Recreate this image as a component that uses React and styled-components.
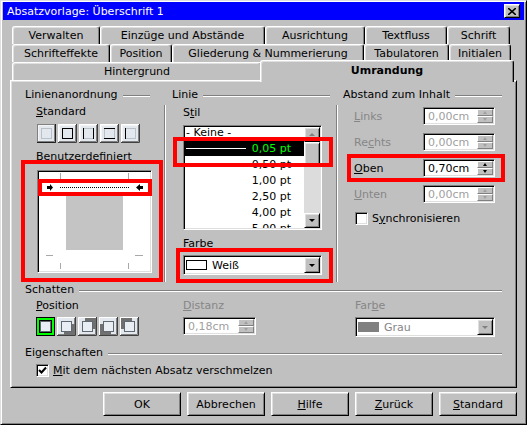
import React from 'react'
import styled, { createGlobalStyle, css } from 'styled-components'

const GlobalStyle = createGlobalStyle`
  html, body {
    margin: 0;
    background: #c0c0c0;
  }
  body {
    font-family: "DejaVu Sans", Verdana, sans-serif;
    font-size: 11px;
    color: #000;
  }
`

// classic 3d edges
const raised = css`
  border: 1px solid;
  border-color: #fff #000 #000 #fff;
  box-shadow: inset 1px 1px #dfdfdf, inset -1px -1px #808080;
`
const sunken = css`
  border: 1px solid;
  border-color: #808080 #fff #fff #808080;
  box-shadow: inset 1px 1px #000, inset -1px -1px #dfdfdf;
`

const Window = styled.div`
  width: 527px;
  height: 425px;
  box-sizing: border-box;
  border: 1px solid;
  border-color: #dfdfdf #000 #000 #dfdfdf;
  box-shadow: inset 1px 1px #fff, inset -1px -1px #808080;
  padding: 1px 2px 2px 2px;
  display: flex;
  flex-direction: column;
  background: #c0c0c0;
`

const TitleBar = styled.div`
  height: 18px;
  flex-shrink: 0;
  background: #0000ff;
  color: #fff;
  display: flex;
  align-items: center;
  justify-content: space-between;
  padding-left: 4px;
`

const CloseButton = styled.div`
  ${raised};
  box-sizing: border-box;
  width: 16px;
  height: 14px;
  margin-right: 4px;
  background: #c0c0c0;
  display: flex;
  align-items: center;
  justify-content: center;
`

const TabStrip = styled.div`
  margin: 6px 0 0 9px;
  display: flex;
  flex-direction: column;
`

const TabRow = styled.div`
  display: flex;
  align-items: flex-end;
  height: 18px;
`

const Tab = styled.div`
  box-sizing: border-box;
  flex-shrink: 0;
  width: ${p => p.$w}px;
  height: 18px;
  border-top: 1px solid #fff;
  border-left: 1px solid #fff;
  border-right: 1px solid #000;
  border-radius: 3px 3px 0 0;
  box-shadow: inset -1px 0 #808080, inset 1px 1px #dfdfdf;
  background: #c0c0c0;
  display: flex;
  align-items: center;
  justify-content: center;
  white-space: nowrap;

  ${p => p.$active && css`
    position: relative;
    z-index: 2;
    height: 22px;
    margin-left: -2px;
    margin-bottom: -2px;
    padding-bottom: 2px;
    font-weight: bold;
  `}
`

const Page = styled.div`
  margin-left: 7px;
  width: 507px;
  box-sizing: border-box;
  ${raised};
  padding: 7px 14px 10px 14px;
`

const Groups = styled.div`
  display: grid;
  grid-template-columns: 139px 2px 170px 2px 1fr;
  grid-template-rows: 17px 177px;
  grid-template-areas:
    "h1 . h2 . h3"
    "b1 s1 b2 s2 b3";
`

const GroupHead = styled.div`
  grid-area: ${p => p.$area || 'auto'};
  display: flex;
  align-items: center;
  height: 14px;
  line-height: 14px;
  white-space: nowrap;
  padding-left: ${p => p.$indent || 0}px;
  margin-top: ${p => p.$top || 0}px;

  &::after {
    content: '';
    flex: 1;
    border-top: 1px solid #808080;
    border-bottom: 1px solid #fff;
    margin: 1px ${p => p.$trail || 0}px 0 5px;
  }
`

const Divider = styled.div`
  grid-area: ${p => p.$area};
  border-left: 1px solid #808080;
  border-right: 1px solid #fff;
`

const Column = styled.div`
  grid-area: ${p => p.$area};
  display: flex;
  flex-direction: column;
  align-items: flex-start;
  padding-left: ${p => p.$indent || 0}px;
`

const Caption = styled.div`
  height: 14px;
  line-height: 14px;
  white-space: nowrap;
  margin-top: ${p => p.$top || 0}px;
  margin-left: ${p => p.$indent || 0}px;
  color: ${p => (p.$disabled ? '#868686' : '#000')};
`

const U = styled.span`
  text-decoration: underline;
`

const Anchor = styled.div`
  position: relative;
  margin-top: ${p => p.$top || 0}px;
  margin-left: ${p => p.$left || 0}px;
`

const Marker = styled.div`
  position: absolute;
  left: ${p => p.$x}px;
  top: ${p => p.$y}px;
  width: ${p => p.$w}px;
  height: ${p => p.$h}px;
  box-sizing: border-box;
  border: 4px solid #ff0000;
  pointer-events: none;
  z-index: 3;
`

const IconRow = styled.div`
  display: flex;
  gap: 2px;
  height: 20px;
  margin-top: ${p => p.$top || 0}px;
  margin-left: ${p => p.$left || 0}px;
`

const PreviewFrame = styled.div`
  ${sunken};
  box-sizing: border-box;
  width: 115px;
  height: 103px;
  padding: 1px;
  background: #fff;
  display: flex;
`

const ListFrame = styled.div`
  ${sunken};
  box-sizing: border-box;
  width: 139px;
  height: 105px;
  padding: 1px;
  background: #fff;
  display: flex;
  overflow: hidden;
`

const ListItems = styled.div`
  flex: 1;
  display: flex;
  flex-direction: column;
  overflow: hidden;
`

const ListRow = styled.div`
  flex-shrink: 0;
  height: 16px;
  display: flex;
  align-items: center;
  justify-content: ${p => (p.$plain ? 'flex-start' : 'space-between')};
  padding: 0 13px 0 1px;
  margin-top: ${p => (p.$first ? -3 : 0)}px;
  background: ${p => (p.$selected ? '#000' : 'transparent')};
  color: ${p => (p.$selected ? '#00ff00' : '#000')};
`

const LineSample = styled.span`
  width: 60px;
  height: 1px;
  background: ${p => (p.$visible ? '#fff' : 'transparent')};
`

const ScrollBar = styled.div`
  width: 16px;
  display: flex;
  flex-direction: column;
`

const ScrollButton = styled.div`
  ${raised};
  box-sizing: border-box;
  height: 15px;
  background: #c0c0c0;
  display: flex;
  align-items: center;
  justify-content: center;
`

const ScrollThumb = styled.div`
  ${raised};
  box-sizing: border-box;
  height: 24px;
  background: #c0c0c0;
`

const ScrollTrack = styled.div`
  flex: 1;
  background: #dcdcdc;
`

const Arrow = styled.span`
  width: 0;
  height: 0;
  border-left: ${p => p.$size}px solid transparent;
  border-right: ${p => p.$size}px solid transparent;
  ${p => (p.$up
    ? css`border-bottom: ${Math.ceil(p.$size * 0.6) + 1}px solid ${p.$color};`
    : css`border-top: ${Math.ceil(p.$size * 0.6) + 1}px solid ${p.$color};`)}
`

const Combo = styled.div`
  ${sunken};
  box-sizing: border-box;
  width: ${p => p.$w}px;
  height: 20px;
  padding: 1px;
  background: #fff;
  display: flex;
`

const ComboValue = styled.div`
  flex: 1;
  display: flex;
  align-items: center;
  gap: 5px;
  padding-left: 1px;
  color: ${p => (p.$disabled ? '#868686' : '#000')};
`

const Swatch = styled.span`
  box-sizing: border-box;
  width: 21px;
  height: 10px;
  border: 1px solid ${p => p.$edge};
  background: ${p => p.$fill};
`

const ComboButton = styled.div`
  ${raised};
  box-sizing: border-box;
  width: 16px;
  background: #c0c0c0;
  display: flex;
  align-items: center;
  justify-content: center;
`

const SpinRows = styled.div`
  display: flex;
  flex-direction: column;
  gap: 8px;
  margin-top: 2px;
`

const SpinRow = styled.div`
  position: relative;
  display: flex;
  align-items: center;
  height: 18px;
`

const SpinLabel = styled.span`
  width: 69px;
  color: ${p => (p.$disabled ? '#868686' : '#000')};
`

const SpinField = styled.div`
  ${sunken};
  box-sizing: border-box;
  width: ${p => p.$w}px;
  height: 18px;
  padding: 1px;
  background: #fff;
  display: flex;
`

const SpinText = styled.span`
  flex: 1;
  display: flex;
  align-items: center;
  padding-left: 3px;
  color: ${p => (p.$disabled ? '#a0a0a0' : '#000')};
`

const SpinButtons = styled.div`
  width: 16px;
  display: flex;
  flex-direction: column;
`

const SpinHalf = styled.div`
  box-sizing: border-box;
  flex: 1;
  border: 1px solid;
  border-color: #fff #808080 #808080 #fff;
  background: #c0c0c0;
  display: flex;
  align-items: center;
  justify-content: center;
`

const CheckLine = styled.label`
  display: flex;
  align-items: center;
  gap: 4px;
  height: 14px;
  margin-top: ${p => p.$top || 0}px;
  margin-left: ${p => p.$indent || 0}px;
`

const CheckBox = styled.span`
  ${sunken};
  box-sizing: border-box;
  width: 13px;
  height: 13px;
  background: #fff;
  display: inline-flex;
  align-items: center;
  justify-content: center;
`

const ShadowGrid = styled.div`
  display: grid;
  grid-template-columns: 147px 172px 1fr;
  margin-top: 2px;
  padding-left: 11px;
`

const ShadowCell = styled.div`
  display: flex;
  flex-direction: column;
  align-items: flex-start;
  gap: 4px;
`

const ButtonBar = styled.div`
  display: flex;
  justify-content: flex-end;
  gap: 6px;
  margin-top: 4px;
  padding-right: 7px;
`

const PushButton = styled.button`
  ${raised};
  box-sizing: border-box;
  width: 78px;
  height: 24px;
  padding: 0;
  background: #c0c0c0;
  font: inherit;
  color: #000;
`

// line arrangement presets: which sides carry a line
function BorderPreset({ sides = '', focus }) {
  const has = s => sides.includes(s)
  return (
    <svg width="19" height="19" viewBox="0 0 19 19">
      <rect x="0" y="0" width="19" height="19" fill="#e2e8ee" />
      <path d="M0.5 18 V0.5 H18" stroke="#fff" fill="none" />
      <path d="M18.5 0 V18.5 H0" stroke="#404040" fill="none" />
      <path d="M1.5 17 V1.5 H17" stroke="#f4f4f4" fill="none" />
      <path d="M17.5 1 V17.5 H1" stroke="#808080" fill="none" />
      <rect x="4.5" y="4.5" width="10" height="10" fill="none" stroke="#b8c0c8" />
      {has('l') && <path d="M4.5 4 V15" stroke="#000" />}
      {has('r') && <path d="M14.5 4 V15" stroke="#000" />}
      {has('t') && <path d="M4 4.5 H15" stroke="#000" />}
      {has('b') && <path d="M4 14.5 H15" stroke="#000" />}
      {focus && (
        <rect x="0.5" y="0.5" width="18" height="18" fill="none" stroke="#000" strokeDasharray="1 1" />
      )}
    </svg>
  )
}

// shadow position presets: dx/dy is the offset of the cast shadow
function ShadowPreset({ dx = 0, dy = 0, selected }) {
  return (
    <svg width="19" height="19" viewBox="0 0 19 19">
      <rect x="0" y="0" width="19" height="19" fill="#e2e8ee" />
      <path d="M0.5 18 V0.5 H18" stroke="#fff" fill="none" />
      <path d="M18.5 0 V18.5 H0" stroke="#404040" fill="none" />
      <path d="M17.5 1 V17.5 H1" stroke="#808080" fill="none" />
      {(dx !== 0 || dy !== 0) && (
        <rect x={4 + dx} y={4 + dy} width="11" height="11" fill="#707070" />
      )}
      <rect x="4.5" y="4.5" width="10" height="10" fill="#e8eef4" stroke="#606870" />
      {selected && (
        <>
          <rect x="0.5" y="0.5" width="18" height="18" fill="none" stroke="#000" />
          <rect x="2" y="2" width="15" height="15" fill="none" stroke="#00ff00" strokeWidth="2" />
          <rect x="3.5" y="3.5" width="12" height="12" fill="none" stroke="#000" />
        </>
      )}
    </svg>
  )
}

function BorderPreview() {
  return (
    <svg width="111" height="99" viewBox="0 0 111 99">
      <rect x="27" y="21" width="57" height="57" fill="#c4c4c4" />
      <g stroke="#a8a8a8">
        <path d="M21.5 1 V7 M89.5 1 V7" />
        <path d="M21.5 91 V97 M89.5 91 V97" />
        <path d="M7 83.5 H14 M96 83.5 H104" />
      </g>
      <path d="M21 15.5 H90" stroke="#000" strokeDasharray="1 1" />
      <path d="M8 14 H11 V12 L14 15.5 L11 19 V17 H8 Z" fill="#000" />
      <path d="M104 14 H101 V12 L97 15.5 L101 19 V17 H104 Z" fill="#000" />
    </svg>
  )
}

function Spinner({ value, disabled, width = 72 }) {
  const color = disabled ? '#a0a0a0' : '#000'
  return (
    <SpinField $w={width}>
      <SpinText $disabled={disabled}>{value}</SpinText>
      <SpinButtons>
        <SpinHalf><Arrow $up $size={2} $color={color} /></SpinHalf>
        <SpinHalf><Arrow $size={2} $color={color} /></SpinHalf>
      </SpinButtons>
    </SpinField>
  )
}

function Mnemonic({ text, at }) {
  return (
    <>
      {text.slice(0, at)}
      <U>{text[at]}</U>
      {text.slice(at + 1)}
    </>
  )
}

const tabRows = [
  [['Verwalten', 88], ['Einzüge und Abstände', 165], ['Ausrichtung', 100], ['Textfluss', 82], ['Schrift', 63]],
  [['Schrifteffekte', 98], ['Position', 62], ['Gliederung & Nummerierung', 192], ['Tabulatoren', 85], ['Initialen', 62]],
]

const lineStyles = ['0,05 pt', '0,50 pt', '1,00 pt', '2,50 pt', '4,00 pt', '5,00 pt']

const spacing = [
  { label: 'Links', at: 0, value: '0,00cm', disabled: true },
  { label: 'Rechts', at: 2, value: '0,00cm', disabled: true },
  { label: 'Oben', at: 0, value: '0,70cm', marked: true },
  { label: 'Unten', at: 0, value: '0,00cm', disabled: true },
]

export default function App() {
  return (
    <>
      <GlobalStyle />
      <Window>
        <TitleBar>
          <span>Absatzvorlage: Überschrift 1</span>
          <CloseButton>
            <svg width="8" height="7" viewBox="0 0 8 7">
              <path d="M0 0 L8 7 M8 0 L0 7" stroke="#000" strokeWidth="1.6" />
            </svg>
          </CloseButton>
        </TitleBar>

        <TabStrip>
          {tabRows.map((row, i) => (
            <TabRow key={i}>
              {row.map(([name, w]) => (
                <Tab key={name} $w={w}>{name}</Tab>
              ))}
            </TabRow>
          ))}
          <TabRow>
            <Tab $w={250}>Hintergrund</Tab>
            <Tab $w={254} $active>Umrandung</Tab>
          </TabRow>
        </TabStrip>

        <Page>
          <Groups>
            <GroupHead $area="h1" $trail={14}>Linienanordnung</GroupHead>
            <GroupHead $area="h2" $indent={6} $trail={6}>Linie</GroupHead>
            <GroupHead $area="h3" $indent={5}>Abstand zum Inhalt</GroupHead>

            <Column $area="b1">
              <Caption $indent={11}><Mnemonic text="Standard" at={0} /></Caption>
              <IconRow $top={5} $left={12}>
                <BorderPreset focus />
                <BorderPreset sides="lrtb" />
                <BorderPreset sides="lr" />
                <BorderPreset sides="tb" />
                <BorderPreset sides="l" />
              </IconRow>
              <Caption $indent={11} $top={6}>Benutzerdefiniert</Caption>
              <Anchor $top={6} $left={12}>
                <PreviewFrame>
                  <BorderPreview />
                </PreviewFrame>
                <Marker $x={-16} $y={-10} $w={142} $h={122} />
                <Marker $x={1} $y={9} $w={114} $h={17} />
              </Anchor>
            </Column>
            <Divider $area="s1" />

            <Column $area="b2" $indent={17}>
              <Caption $top={1}><Mnemonic text="Stil" at={1} /></Caption>
              <Anchor $top={5}>
                <ListFrame>
                  <ListItems>
                    <ListRow $first $plain>- Keine -</ListRow>
                    {lineStyles.map((s, i) => (
                      <ListRow key={s} $selected={i === 0}>
                        <LineSample $visible={i === 0} />
                        <span>{s}</span>
                      </ListRow>
                    ))}
                  </ListItems>
                  <ScrollBar>
                    <ScrollButton><Arrow $up $size={3} $color="#808080" /></ScrollButton>
                    <ScrollThumb />
                    <ScrollTrack />
                    <ScrollButton><Arrow $size={3} $color="#000" /></ScrollButton>
                  </ScrollBar>
                </ListFrame>
                <Marker $x={-10} $y={12} $w={160} $h={30} />
              </Anchor>
              <Caption $top={7}>Farbe</Caption>
              <Anchor $top={4}>
                <Combo $w={139}>
                  <ComboValue>
                    <Swatch $edge="#000" $fill="#fff" />
                    Weiß
                  </ComboValue>
                  <ComboButton><Arrow $size={3} $color="#000" /></ComboButton>
                </Combo>
                <Marker $x={-7} $y={-7} $w={157} $h={35} />
              </Anchor>
            </Column>
            <Divider $area="s2" />

            <Column $area="b3" $indent={16}>
              <SpinRows>
                {spacing.map(row => (
                  <SpinRow key={row.label}>
                    <SpinLabel $disabled={row.disabled}>
                      <Mnemonic text={row.label} at={row.at} />
                    </SpinLabel>
                    <Spinner value={row.value} disabled={row.disabled} />
                    {row.marked && <Marker $x={-7} $y={-5} $w={158} $h={28} />}
                  </SpinRow>
                ))}
              </SpinRows>
              <CheckLine $top={8} $indent={1}>
                <CheckBox />
                <span>S<U>y</U>nchronisieren</span>
              </CheckLine>
            </Column>
          </Groups>

          <GroupHead $top={1}>Schatten</GroupHead>
          <ShadowGrid>
            <ShadowCell>
              <Caption><Mnemonic text="Position" at={0} /></Caption>
              <IconRow>
                <ShadowPreset selected />
                <ShadowPreset dx={3} dy={3} />
                <ShadowPreset dx={3} dy={-3} />
                <ShadowPreset dx={-3} dy={3} />
                <ShadowPreset dx={-3} dy={-3} />
              </IconRow>
            </ShadowCell>
            <ShadowCell>
              <Caption $disabled><Mnemonic text="Distanz" at={0} /></Caption>
              <Spinner value="0,18cm" disabled width={73} />
            </ShadowCell>
            <ShadowCell>
              <Caption $disabled><Mnemonic text="Farbe" at={3} /></Caption>
              <Combo $w={140}>
                <ComboValue $disabled>
                  <Swatch $edge="#808080" $fill="#808080" />
                  Grau
                </ComboValue>
                <ComboButton><Arrow $size={3} $color="#808080" /></ComboButton>
              </Combo>
            </ShadowCell>
          </ShadowGrid>

          <GroupHead $top={9}>Eigenschaften</GroupHead>
          <CheckLine $top={3} $indent={11}>
            <CheckBox>
              <svg width="9" height="9" viewBox="0 0 9 9">
                <path d="M1 4 L3.5 6.5 L8 1.5" stroke="#000" strokeWidth="2" fill="none" />
              </svg>
            </CheckBox>
            <span><Mnemonic text="Mit dem nächsten Absatz verschmelzen" at={0} /></span>
          </CheckLine>
        </Page>

        <ButtonBar>
          <PushButton>OK</PushButton>
          <PushButton>Abbrechen</PushButton>
          <PushButton><Mnemonic text="Hilfe" at={0} /></PushButton>
          <PushButton><Mnemonic text="Zurück" at={0} /></PushButton>
          <PushButton><Mnemonic text="Standard" at={0} /></PushButton>
        </ButtonBar>
      </Window>
    </>
  )
}
